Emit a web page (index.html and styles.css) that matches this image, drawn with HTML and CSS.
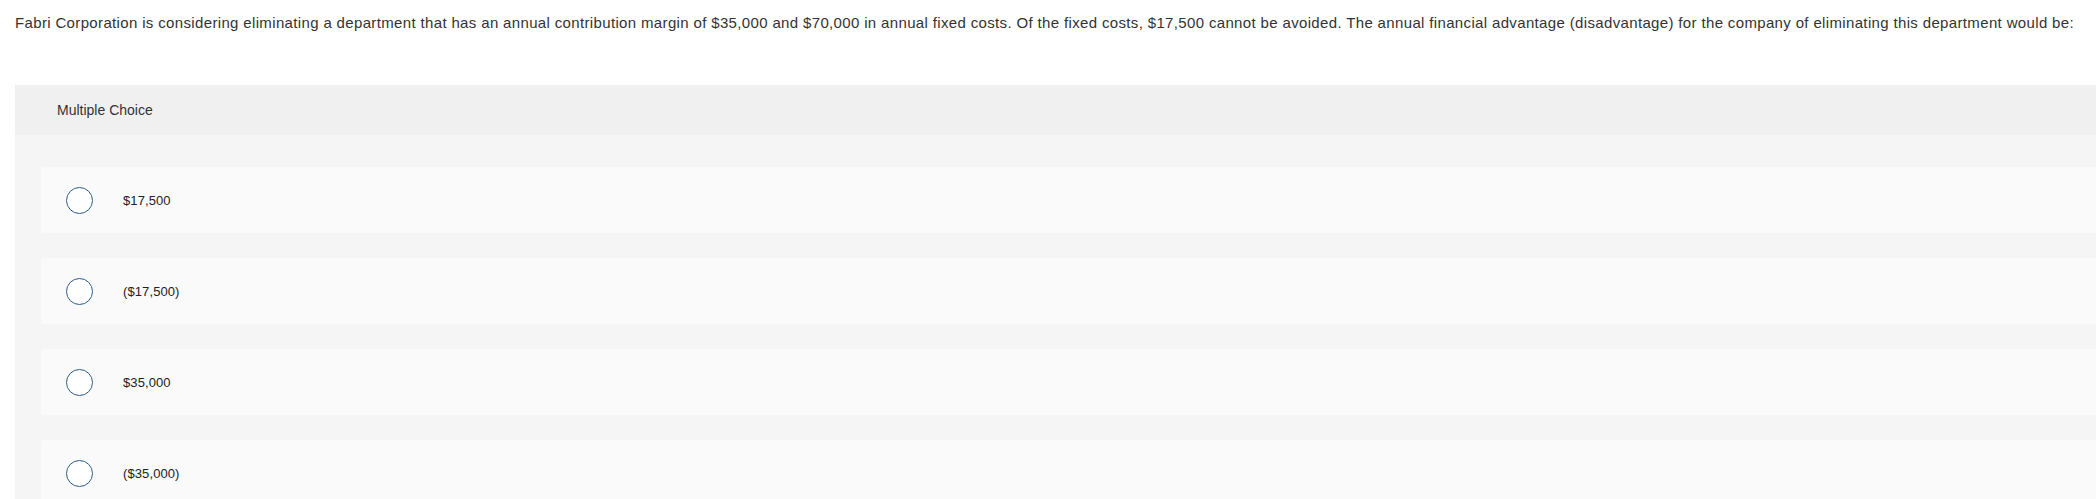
FILE: index.html
```html
<!DOCTYPE html>
<html>
<head>
<meta charset="utf-8">
<link rel="stylesheet" href="styles.css">
</head>
<body>
<p class="question">Fabri Corporation is considering eliminating a department that has an annual contribution margin of $35,000 and $70,000 in annual fixed costs. Of the fixed costs, $17,500 cannot be avoided. The annual financial advantage (disadvantage) for the company of eliminating this department would be:</p>
<div class="panel">
  <div class="panel-header">Multiple Choice</div>
  <div class="choices">
    <div class="choice"><span class="radio"></span><span class="label">$17,500</span></div>
    <div class="choice"><span class="radio"></span><span class="label">($17,500)</span></div>
    <div class="choice"><span class="radio"></span><span class="label">$35,000</span></div>
    <div class="choice"><span class="radio"></span><span class="label">($35,000)</span></div>
  </div>
</div>
</body>
</html>
```
FILE: styles.css
```css
html, body {
  margin: 0;
  padding: 0;
  background: #ffffff;
  overflow: hidden;
}
body {
  font-family: "Liberation Sans", Arial, sans-serif;
  color: #333333;
}
.question {
  margin: 0;
  padding: 14px 0 0 15px;
  font-size: 15px;
  line-height: 18px;
  letter-spacing: 0.35px;
  white-space: nowrap;
}
.panel {
  margin: 53px 0 0 15px;
  background: #f5f5f5;
}
.panel-header {
  height: 50px;
  background: #f0f0f0;
  display: flex;
  align-items: center;
  padding-left: 42px;
  font-size: 14px;
  color: #333333;
}
.choices {
  display: flex;
  flex-direction: column;
  gap: 25px;
  padding: 32px 0 30px 26px;
}
.choice {
  height: 66px;
  background: #fafafa;
  border-radius: 3px 0 0 3px;
  display: flex;
  align-items: center;
  padding-left: 25px;
}
.radio {
  width: 25px;
  height: 25px;
  border: 1.5px solid #2c5b8c;
  border-radius: 50%;
  background: #ffffff;
  flex-shrink: 0;
}
.label {
  margin-left: 30px;
  font-size: 13px;
  letter-spacing: 0.1px;
  color: #222222;
}
```
